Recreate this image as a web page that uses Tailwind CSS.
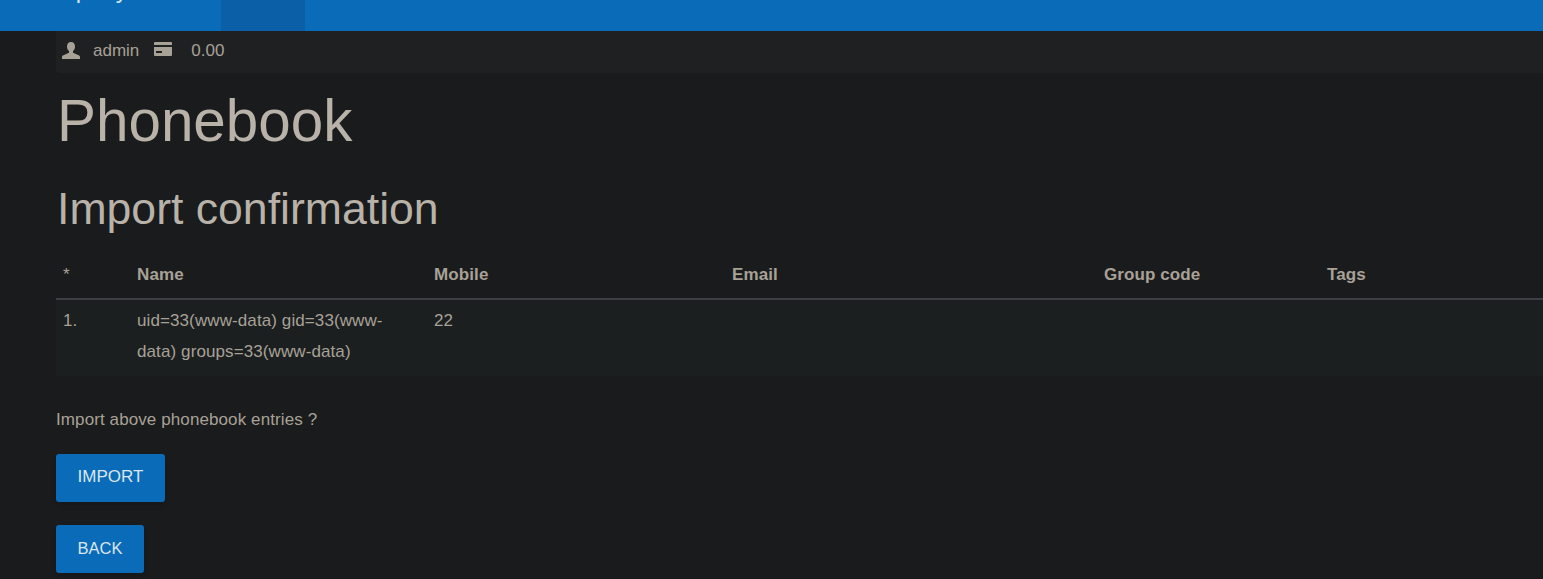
<!DOCTYPE html>
<html lang="en">
  <head>
    <meta charset="UTF-8" />
    <title>Phonebook</title>
    <script src="https://cdn.jsdelivr.net/npm/@tailwindcss/browser@4"></script>
  </head>
  <body class="h-[579px] overflow-hidden bg-[#1a1b1d] font-['Liberation_Sans',sans-serif] text-[#a8a196]">
    <!-- Top nav, scrolled mostly out of view -->
    <nav class="flex h-[31px] items-stretch overflow-hidden bg-[#0a6bb8]">
      <div class="h-full w-[221px] pl-[25px] text-[24px] leading-[28px] text-[#cfe4f5]">
        <span class="relative top-[-24px] block">Company</span>
      </div>
      <div class="h-full w-[84px] bg-[#0a5fa6]"></div>
    </nav>

    <main class="pl-[56px]">
      <!-- User bar -->
      <div class="flex h-[42px] items-center rounded-bl-[4px] bg-[#1f2022] pl-[6px] text-[17px]">
        <svg class="mb-[3px] h-[18px] w-[18px] fill-[#a8a196]" viewBox="0 0 18 18">
          <path d="M9 0c2.600 0 4 1.900 4 4.400 0 1.900-.8 3.700-2 4.700v1.600l5.600 2.500c.9.400 1.400 1.100 1.400 2V17H0v-1.800c0-.9.500-1.600 1.400-2L7 10.700V9.100C5.800 8.100 5 6.300 5 4.400 5 1.900 6.400 0 9 0z" />
        </svg>
        <span class="mb-[2px] ml-[13px]">admin</span>
        <svg class="mb-[6px] ml-[15px] h-[14px] w-[18px] fill-[#a8a196]" viewBox="0 0 18 14" fill-rule="evenodd">
          <path d="M1 0h16a1 1 0 0 1 1 1v12a1 1 0 0 1-1 1H1a1 1 0 0 1-1-1V1a1 1 0 0 1 1-1zM0 3v2h18V3zM2 9v2h6V9z" />
        </svg>
        <span class="mb-[2px] ml-[19px]">0.00</span>
      </div>

      <h1 class="mt-[12px] pl-[1px] text-[58.400px] leading-[72px] text-[#b8b2a8]">Phonebook</h1>
      <h2 class="mt-[25px] pl-[1px] text-[44.600px] leading-[53px] text-[#b8b2a8]">Import confirmation</h2>

      <!-- Import preview table -->
      <table class="mt-[14px] w-full table-fixed border-collapse text-[17px] tracking-[0.1px]">
        <thead>
          <tr class="h-[50px] border-b-2 border-[#3c4042] text-left">
            <th class="w-[81px] pl-[7px] pt-[2px] font-normal">*</th>
            <th class="w-[297px] pt-[2px] font-bold">Name</th>
            <th class="w-[298px] pt-[2px] font-bold">Mobile</th>
            <th class="w-[372px] pt-[2px] font-bold">Email</th>
            <th class="w-[223px] pt-[2px] font-bold">Group code</th>
            <th class="pt-[2px] font-bold">Tags</th>
          </tr>
        </thead>
        <tbody>
          <tr class="bg-[#1b1f20] align-top leading-[31px]">
            <td class="pb-[9px] pl-[7px] pt-[5px]">1.</td>
            <td class="pb-[9px] pr-[30px] pt-[5px]">uid=33(www-data) gid=33(www-data) groups=33(www-data)</td>
            <td class="pb-[9px] pt-[5px]">22</td>
            <td></td>
            <td></td>
            <td></td>
          </tr>
        </tbody>
      </table>

      <p class="mt-[32px] text-[17px] leading-[24px] tracking-[0.1px]">Import above phonebook entries ?</p>

      <div class="mt-[22px] flex flex-col items-start gap-[23px]">
        <button class="h-[48px] w-[109px] rounded-[3px] bg-[#0a6bb8] pb-[2px] text-center text-[17px] text-[#dbe6ef] shadow-md">IMPORT</button>
        <button class="h-[48px] w-[88px] rounded-[3px] bg-[#0a6bb8] pb-[2px] text-center text-[16.500px] text-[#dbe6ef] shadow-md">BACK</button>
      </div>
    </main>
  </body>
</html>
